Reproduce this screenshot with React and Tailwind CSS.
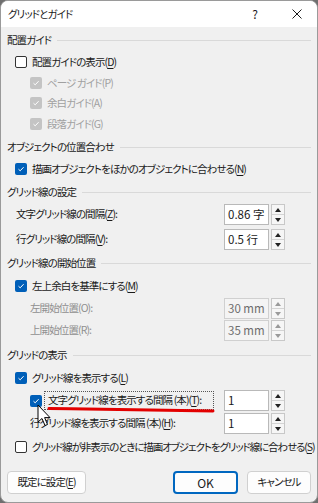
import React from 'react';

const font = { fontFamily: '"Noto Sans CJK JP", "Noto Sans", sans-serif' };

function Check({ checked, disabled }) {
    if (checked) {
        return (
            <span className={`flex items-center justify-center w-[12px] h-[12px] rounded-[2px] shrink-0 ${disabled ? 'bg-[#c4c4c4]' : 'bg-[#005fb8]'}`}>
                <svg width="8" height="8" viewBox="0 0 8 8">
                    <path d="M1.5 4.2 L3.2 5.8 L6.6 2.2" fill="none" stroke="#fff" strokeWidth="1" />
                </svg>
            </span>
        );
    }
    return <span className="block w-[12px] h-[12px] rounded-[2px] border border-[#333] bg-white shrink-0" />;
}

function Header({ children, mt }) {
    return (
        <div className={`flex items-center h-[20px] pl-[6px] pr-[6px] ${mt}`}>
            <span className="text-[#1a1a1a]">{children}</span>
            <span className="flex-1 h-px bg-[#d9d9d9] ml-[6px]" />
        </div>
    );
}

function Spin({ value, disabled }) {
    const arrow = disabled ? '#9a9a9a' : '#222';
    return (
        <div className="flex items-center gap-[2px]">
            <div className={`w-[45px] h-[21px] border flex items-center pl-[3px] text-[11.5px] tracking-normal ${disabled ? 'border-[#d0d0d0] bg-[#f4f4f4] text-[#6d6d6d]' : 'border-[#b9b9b9] bg-white text-[#1a1a1a]'}`}>
                {value}
            </div>
            <div className="w-[14px] h-[21px] border border-[#c8c8c8] bg-[#f6f6f6] flex flex-col">
                <div className="flex-1 flex items-center justify-center border-b border-[#d4d4d4]">
                    <svg width="6" height="4" viewBox="0 0 6 4"><path d="M0 4 L3 0 L6 4 Z" fill={arrow} /></svg>
                </div>
                <div className="flex-1 flex items-center justify-center">
                    <svg width="6" height="4" viewBox="0 0 6 4"><path d="M0 0 L3 4 L6 0 Z" fill={arrow} /></svg>
                </div>
            </div>
        </div>
    );
}

function U({ children }) {
    return <span className="underline underline-offset-2">{children}</span>;
}

export default function App() {
    return (
        <div className="w-[318px] h-[503px] bg-[#6f6f6f] text-[10.5px] leading-none whitespace-nowrap text-[#1a1a1a] [font-feature-settings:'palt'] tracking-[-0.9px]" style={font}>
            <div className="relative w-full h-full rounded-[8px] border border-[#9a9a9a] bg-[#f0f0f0] overflow-hidden flex flex-col">
                {/* title bar */}
                <div className="h-[26px] bg-white flex items-center pl-[7px] shrink-0">
                    <span>グリッドとガイド</span>
                    <span className="ml-auto mr-[34px] text-[12px] tracking-normal">?</span>
                    <svg className="mr-[15px]" width="10" height="10" viewBox="0 0 10 10">
                        <path d="M0.5 0.5 L9.5 9.5 M9.5 0.5 L0.5 9.5" stroke="#1a1a1a" strokeWidth="1" />
                    </svg>
                </div>

                <Header mt="mt-[3px]">配置ガイド</Header>
                <div className="flex items-center h-[20px] pl-[14px] gap-[5px] mt-[2px]">
                    <Check />
                    <span>配置ガイドの表示(<U>D</U>)</span>
                </div>
                <div className="flex items-center h-[20px] pl-[29px] gap-[5px] mt-[1px] text-[#a0a0a0]">
                    <Check checked disabled />
                    <span>ページ ガイド(P)</span>
                </div>
                <div className="flex items-center h-[20px] pl-[29px] gap-[5px] text-[#a0a0a0]">
                    <Check checked disabled />
                    <span>余白ガイド(A)</span>
                </div>
                <div className="flex items-center h-[20px] pl-[29px] gap-[5px] mt-[1px] text-[#a0a0a0]">
                    <Check checked disabled />
                    <span>段落ガイド(G)</span>
                </div>

                <Header mt="mt-[3px]">オブジェクトの位置合わせ</Header>
                <div className="flex items-center h-[20px] pl-[14px] gap-[5px] mt-[2px]">
                    <Check checked />
                    <span>描画オブジェクトをほかのオブジェクトに合わせる(<U>N</U>)</span>
                </div>

                <Header mt="mt-[3px]">グリッド線の設定</Header>
                <div className="flex items-center h-[21px] pl-[15px] pr-[32px] mt-[2px]">
                    <span>文字グリッド線の間隔(<U>Z</U>):</span>
                    <div className="ml-auto"><Spin value="0.86 字" /></div>
                </div>
                <div className="flex items-center h-[21px] pl-[15px] pr-[32px] mt-[4px]">
                    <span>行グリッド線の間隔(<U>V</U>):</span>
                    <div className="ml-auto"><Spin value="0.5 行" /></div>
                </div>

                <Header mt="mt-[3px]">グリッド線の開始位置</Header>
                <div className="flex items-center h-[20px] pl-[14px] gap-[5px] mt-[3px]">
                    <Check checked />
                    <span>左上余白を基準にする(<U>M</U>)</span>
                </div>
                <div className="flex items-center h-[21px] pl-[29px] pr-[32px] mt-[2px] text-[#8f8f8f]">
                    <span>左開始位置(O):</span>
                    <div className="ml-auto"><Spin value="30 mm" disabled /></div>
                </div>
                <div className="flex items-center h-[21px] pl-[29px] pr-[32px] mt-[1px] text-[#8f8f8f]">
                    <span>上開始位置(R):</span>
                    <div className="ml-auto"><Spin value="35 mm" disabled /></div>
                </div>

                <Header mt="mt-[4px]">グリッドの表示</Header>
                <div className="flex items-center h-[20px] pl-[14px] gap-[5px] mt-[3px]">
                    <Check checked />
                    <span>グリッド線を表示する(<U>L</U>)</span>
                </div>
                <div className="flex items-center h-[21px] pl-[29px] pr-[32px] mt-[2px]">
                    <Check checked />
                    <span className="ml-[2px] w-[170px] h-[19px] pl-[3px] flex items-center border border-dotted border-[#555]">文字グリッド線を表示する間隔 (本)(<U>T</U>):</span>
                    <div className="ml-auto"><Spin value="1" /></div>
                </div>
                <div className="flex items-center h-[21px] pl-[29px] pr-[32px] mt-[2px]">
                    <span>行グリッド線を表示する間隔 (本)(<U>H</U>):</span>
                    <div className="ml-auto"><Spin value="1" /></div>
                </div>
                <div className="flex items-center h-[20px] pl-[14px] gap-[5px] mt-[3px]">
                    <Check />
                    <span className="tracking-[-1.1px]">グリッド線が非表示のときに描画オブジェクトをグリッド線に合わせる(<U>S</U>)</span>
                </div>

                {/* buttons */}
                <div className="flex items-center px-[6px] mt-[14px]">
                    <button className="h-[23px] w-[79px] bg-[#fdfdfd] border border-[#d0d0d0] rounded-[4px]">既定に設定(<U>E</U>)</button>
                    <button className="ml-auto h-[23px] w-[65px] bg-[#fdfdfd] border-2 border-[#0067c0] rounded-[4px] text-[12px] tracking-normal">OK</button>
                    <button className="ml-[9px] h-[23px] w-[64px] bg-[#fdfdfd] border border-[#d0d0d0] rounded-[4px]">キャンセル</button>
                </div>

                {/* red annotation stroke */}
                <svg className="absolute left-[46px] top-[405px]" width="170" height="8" viewBox="0 0 170 8">
                    <path d="M2 2.5 C 60 3.5, 120 4.5, 166 5" fill="none" stroke="#e30000" strokeWidth="3" strokeLinecap="round" />
                </svg>

                {/* mouse cursor */}
                <svg className="absolute left-[36px] top-[403px]" width="16" height="24" viewBox="0 0 16 24">
                    <path d="M1 1 L1 18 L5 14.5 L8 21.5 L10.5 20.5 L7.6 13.6 L13 13.6 Z" fill="#fff" stroke="#000" strokeWidth="1" strokeLinejoin="round" />
                </svg>
            </div>
        </div>
    );
}
